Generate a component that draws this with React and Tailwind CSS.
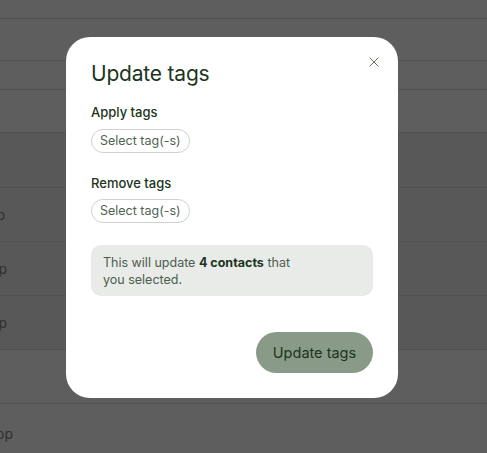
import { X } from "lucide-react";

const rows = [
  { h: "h-[19px]", dark: false, text: "", off: "" },
  { h: "h-[42px]", dark: false, text: "", off: "" },
  { h: "h-[29px]", dark: false, text: "", off: "" },
  { h: "h-[43px]", dark: false, text: "", off: "" },
  { h: "h-[55px]", dark: true, text: "", off: "" },
  { h: "h-[54px]", dark: true, text: "App", off: "-ml-[41px]" },
  { h: "h-[54px]", dark: true, text: "App", off: "-ml-[39px]" },
  { h: "h-[54px]", dark: true, text: "App", off: "-ml-[39px]" },
  { h: "h-[54px]", dark: false, text: "", off: "" },
  { h: "h-[60px]", dark: false, text: "Shopp", off: "-ml-[33px]" },
];

function TagSelect() {
  return (
    <button
      type="button"
      className="self-start h-[24px] px-[8px] rounded-full border border-[#cdd2cd] text-[12.5px] leading-none text-[#4f6352] bg-white"
    >
      Select tag(-s)
    </button>
  );
}

export default function App() {
  return (
    <div
      className="relative w-[487px] h-[453px] overflow-hidden bg-[#5e5e5e]"
      style={{ fontFamily: "Inter, 'Noto Sans', sans-serif" }}
    >
      {/* table behind the overlay */}
      <div className="flex flex-col">
        {rows.map((r, i) => (
          <div
            key={i}
            className={`${r.h} flex items-center border-b border-[#515151] ${r.dark ? "bg-[#585858]" : ""}`}
          >
            {r.text && (
              <span className={`${r.off} w-[46px] shrink-0 text-right text-[14px] text-[#2f2f2f] whitespace-nowrap`}>
                {r.text}
              </span>
            )}
          </div>
        ))}
      </div>

      {/* modal */}
      <div className="absolute left-[66px] top-[37px] w-[332px] h-[361px] bg-white rounded-[24px] px-[25px] pt-[23px] pb-[25px] flex flex-col">
        <button type="button" className="absolute right-[16px] top-[17px] text-[#4f6b55]">
          <X size={16} strokeWidth={1.4} />
        </button>

        <h2 className="h-[28px] text-[21px] leading-[28px] text-[#1b3520] tracking-[-0.2px]">Update tags</h2>

        <div className="mt-[14px] h-[20px] text-[13px] leading-[20px] font-medium text-[#1b3520]">Apply tags</div>
        <div className="mt-[7px] flex">
          <TagSelect />
        </div>

        <div className="mt-[20px] h-[20px] text-[13px] leading-[20px] font-medium text-[#1b3520]">Remove tags</div>
        <div className="mt-[6px] flex">
          <TagSelect />
        </div>

        <div className="mt-[22px] rounded-[10px] bg-[#e9ebe8] px-[12px] py-[8.5px]">
          <p className="max-w-[200px] text-[12.5px] leading-[17px] text-[#4a5e4d]">
            This will update <span className="font-bold text-[#1b3520]">4 contacts</span> that you selected.
          </p>
        </div>

        <div className="mt-auto flex justify-end">
          <button
            type="button"
            className="h-[41px] w-[117px] rounded-full bg-[#8a9a88] text-[14.5px] text-[#1b3520]"
          >
            Update tags
          </button>
        </div>
      </div>
    </div>
  );
}
